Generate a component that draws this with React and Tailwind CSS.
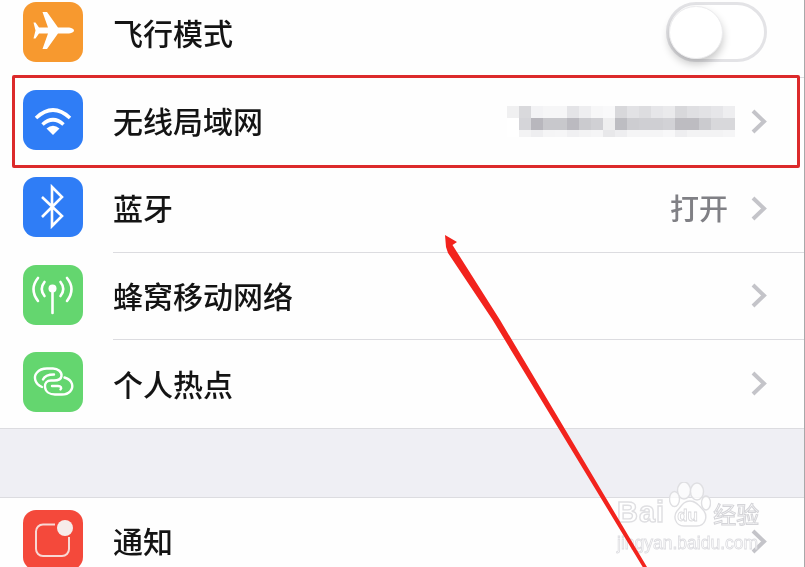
import React from 'react';

const mosaic = [
  ['#f0f0f1', '#d9d9dc', '#f3f3f5', '#f6f6f7', '#f6f6f7', '#e4e4e7', '#eeeef0', '#f7f7f8', '#f9f9fa', '#d8d8db', '#e2e2e5', '#dddde0', '#e6e6e9', '#eaeaec', '#d8d8db', '#dfdfe2', '#e2e2e5', '#e6e6e9', '#eeeef0'],
  ['#ffffff', '#d5d5d9', '#b8b7bd', '#c8c8cc', '#c8c8cc', '#bbbac0', '#cbcbcf', '#d0d0d4', '#eeeeef', '#bdbdc2', '#cdcdd1', '#cfcfd3', '#cfcfd3', '#d2d2d6', '#bdbcc1', '#bdbcc1', '#cbcbcf', '#d8d8db', '#d8d8db'],
  ['#ffffff', '#f3f3f4', '#eeeef0', '#f5f5f6', '#f6f6f7', '#f0f0f2', '#f3f3f4', '#f5f5f6', '#e8e8ea', '#eeeef0', '#f5f5f6', '#f5f5f6', '#f5f5f6', '#f8f8f9', '#eeeef0', '#f3f3f4', '#f3f3f4', '#f3f3f4', '#f5f5f6'],
];

const AppIcon = ({ color, children }) => (
  <div className={`w-[60px] h-[60px] rounded-[13px] shrink-0 mb-[3px] ${color}`}>
    <svg viewBox="0 0 60 60" className="w-[60px] h-[60px]">{children}</svg>
  </div>
);

const Chevron = ({ gap = 'ml-4' }) => (
  <svg viewBox="0 0 16 25" className={`w-4 h-[25px] shrink-0 ${gap}`} fill="none">
    <path d="M2 2l11 10.500L2 23" stroke="#c4c4c9" strokeWidth="4" />
  </svg>
);

const Row = ({ icon, label, children, line = 'border-b ml-[30px]' }) => (
  <div className="flex items-stretch pl-[23px] h-[87.5px]">
    <div className="flex items-center">{icon}</div>
    <div className={`flex-1 flex items-center pr-[37px] border-[#dcdce0] ${line}`}>
      <span className="text-[30px] leading-none font-medium text-[#141414] mb-[2px]">{label}</span>
      <div className="flex-1" />
      {children}
    </div>
  </div>
);

const Toggle = () => (
  <div className="relative w-[101px] h-[60px] rounded-full border-[3px] border-[#e3e3e6] bg-white mb-[3px]">
    <div className="absolute left-0 top-[1px] w-[54px] h-[53px] rounded-full bg-white shadow-[0_5px_8px_rgba(0,0,0,0.22)] border border-[#ececee]" />
  </div>
);

const Watermark = () => (
  <div className="absolute left-[617px] top-[482px] w-[142px]">
    <div className="flex items-end h-[45px]">
      <span className="text-[29px] leading-[29px] font-bold tracking-[1px] text-white/70 [-webkit-text-stroke:1.4px_#dfdfe2] font-['Liberation_Sans',sans-serif]">Bai</span>
      <div className="relative w-[42px] h-[45px] ml-[4px] shrink-0">
        <svg viewBox="0 0 42 45" className="w-[42px] h-[45px]" fill="rgba(255,255,255,0.75)" stroke="#dfdfe2" strokeWidth="1.4">
          <ellipse cx="15" cy="8.500" rx="6.500" ry="8.500" />
          <ellipse cx="28" cy="9.500" rx="6.500" ry="8.500" />
          <ellipse cx="5.500" cy="17" rx="5" ry="7.500" />
          <ellipse cx="37" cy="21" rx="4.500" ry="7" />
          <path d="M21 19c-7 0-9 6-13 10-4 5-2 15 7 15h13c8 0 11-9 7-15-4-4-7-10-14-10z" />
        </svg>
        <span className="absolute left-[8px] top-[24px] text-[17px] leading-[20px] font-bold text-white/60 [-webkit-text-stroke:0.8px_#d9d9dc] font-['Liberation_Sans',sans-serif]">du</span>
      </div>
      <span className="ml-[2px] text-[23px] leading-[28px] whitespace-nowrap text-white/70 [-webkit-text-stroke:1px_#d4d4d8]">经验</span>
    </div>
    <div className="mt-[5px] text-[17.5px] leading-[22px] whitespace-nowrap text-white/60 [-webkit-text-stroke:0.8px_#dcdce0] font-['Liberation_Sans',sans-serif]">jingyan.baidu.com</div>
  </div>
);

export default function App() {
  return (
    <div className="relative w-[805px] h-[567px] overflow-hidden bg-[#fefefe] border-r border-[#a8a8aa] font-['Noto_Sans_CJK_SC','Noto_Sans',sans-serif] blur-[0.5px]">
      <div className="-mt-[10px]">
        <Row
          label="飞行模式"
          icon={
            <AppIcon color="bg-[#f7992f]">
              <path fill="#fff" d="M51 28.500c0-1.600-3-3-6-3H35L24 10h-4.500l5.500 15.500H16l-3.500-5h-2l2 8-2 8h2l3.500-5h9l-5.500 15.500H24L35 31.500h10c3 0 6-1.400 6-3z" />
            </AppIcon>
          }
        >
          <Toggle />
        </Row>

        <Row
          label="无线局域网"
          line="ml-[30px]"
          icon={
            <AppIcon color="bg-[#2f7df6]">
              <g fill="none" stroke="#fff" strokeWidth="3.6">
                <path d="M13 28Q30 12 47 28" />
                <path d="M19.500 34.500Q30 25 40.500 34.500" />
              </g>
              <path fill="#fff" d="M30 45l-6.500-6.500Q30 33 36.500 38.500z" />
            </AppIcon>
          }
        >
          <svg viewBox="0 0 228 31" className="w-[228px] h-[31px] shrink-0 blur-[0.6px]">
            {mosaic.map((cells, r) =>
              cells.map((fill, c) => <rect key={`${r}-${c}`} x={c * 12} y={r * 12} width="12.500" height={r === 2 ? 7 : 12.500} fill={fill} />)
            )}
          </svg>
          <Chevron />
        </Row>

        <Row
          label="蓝牙"
          icon={
            <AppIcon color="bg-[#2f7df6]">
              <path fill="none" stroke="#fff" strokeWidth="2.600" d="M19 20l20 19-10 10V10l10 10-20 20" />
            </AppIcon>
          }
        >
          <span className="text-[29px] leading-none font-medium text-[#808085] mb-[1px]">打开</span>
          <Chevron gap="ml-[23px]" />
        </Row>

        <Row
          label="蜂窝移动网络"
          icon={
            <AppIcon color="bg-[#64d66f]">
              <g fill="none" stroke="#fff" strokeWidth="2.600" strokeLinecap="round">
                <path d="M15 13Q6 24 15 36" />
                <path d="M21.500 17Q16 24 21.500 31" />
                <path d="M44 13Q53 24 44 36" />
                <path d="M37.500 17Q43 24 37.500 31" />
                <path d="M29.500 24V48" />
              </g>
              <circle cx="29.500" cy="23.500" r="4" fill="#fff" />
            </AppIcon>
          }
        >
          <Chevron />
        </Row>

        <Row
          label="个人热点"
          line="ml-[30px]"
          icon={
            <AppIcon color="bg-[#64d66f]">
              <g fill="none" stroke="#fff" strokeWidth="2.400" strokeLinecap="round">
                <path d="M19 35C12 32 10 25 14 20.500 16.500 17.500 20 16.500 24 16.500H30C35 16.500 39 20 38.500 24 38 27.500 34 28.500 31 28.500H28C24 28.500 21.500 31 22 35 22.500 40 27 42.500 32 42.500H39C46 42.500 50.500 37.500 49 32 48 28.500 45 26.500 41.500 25.500" />
                <path d="M20 27.500C21.500 24 26 22.500 31 22.500" />
                <path d="M29 34H35C38 34 39 36 37.500 37.500" />
              </g>
            </AppIcon>
          }
        >
          <Chevron />
        </Row>

        <div className="h-[70px] bg-[#efeff4] border-y border-[#dcdce0]" />

        <Row
          label="通知"
          line="ml-[30px]"
          icon={
            <AppIcon color="bg-[#f4493b]">
              <path fill="none" stroke="#f8d8d4" strokeWidth="2" d="M32 14.500H20a7 7 0 0 0-7 7V39a7 7 0 0 0 7 7h19a7 7 0 0 0 7-7V27" />
              <circle cx="42" cy="18" r="8" fill="#f6ecea" />
            </AppIcon>
          }
        >
          <Chevron />
        </Row>
      </div>

      <div className="absolute left-[12px] top-[75px] w-[788px] h-[93px] rounded-[2px] border-[3px] border-[#dc2a2b]" />

      <Watermark />

      <svg viewBox="0 0 805 567" className="absolute inset-0 w-[805px] h-[567px]">
        <path fill="#f2231d" d="M445 235L457 242 452.500 245 500 320 647 567H642.700L492.700 320 448 253 446 247z" />
      </svg>
    </div>
  );
}
